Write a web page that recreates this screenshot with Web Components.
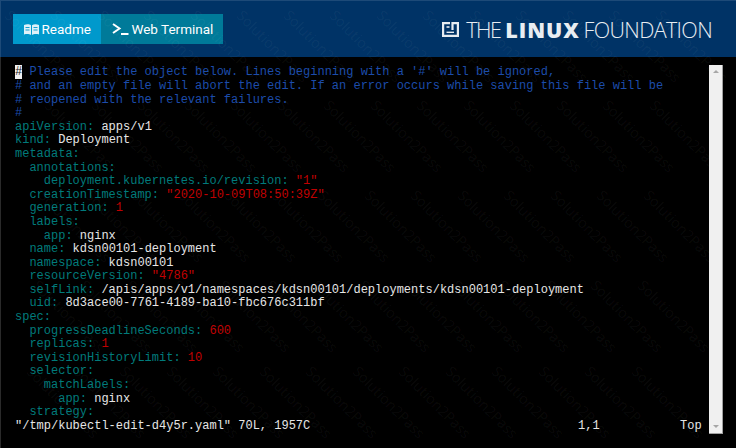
<!DOCTYPE html>
<html>
<head>
<meta charset="utf-8">
<title>Web Terminal</title>
<style>
html, body { margin: 0; padding: 0; background: #000; }
</style>
</head>
<body>
<lab-page>
	<lab-header slot="header">
		<lab-tab active icon="book">Readme</lab-tab>
		<lab-tab icon="prompt">Web Terminal</lab-tab>
	</lab-header>
	<vim-screen slot="screen"></vim-screen>
	<water-mark slot="mark"></water-mark>
</lab-page>

<script>
//page frame: header on top, terminal below, watermark laid over both
class LabPage extends HTMLElement {
	constructor() {
		super();
		this.attachShadow({mode:'open'}).innerHTML = `
		<style>
		:host { display: flex; flex-direction: column; width: 736px; height: 448px; position: relative; overflow: hidden; background: #000; }
		.top { flex: none; }
		.main { flex: 1; min-height: 0; display: flex; }
		</style>
		<div class="top"><slot name="header"></slot></div>
		<div class="main"><slot name="screen"></slot></div>
		<slot name="mark"></slot>`;
	}
}

class LabHeader extends HTMLElement {
	constructor() {
		super();
		this.attachShadow({mode:'open'}).innerHTML = `
		<style>
		:host { display: flex; align-items: flex-start; justify-content: space-between; height: 57px; box-sizing: border-box; padding: 14px 24px 0 13px; background: #003366; box-shadow: inset 1px 1px 0 #1d4a78; }
		.tabs { display: flex; }
		.logo { display: flex; align-items: center; height: 30px; color: #e8edf2; font: 300 21.5px "Open Sans", sans-serif; white-space: nowrap; }
		.the { margin-left: 7px; letter-spacing: -1.5px; }
		.linux { margin-left: 5px; font-weight: 800; letter-spacing: 0.9px; }
		.found { margin-left: 4px; letter-spacing: -0.65px; }
		svg { display: block; flex: none; }
		</style>
		<div class="tabs"><slot></slot></div>
		<div class="logo">
			<svg width="17" height="15" viewBox="0 0 17 15" fill="none" stroke="#e8edf2" stroke-width="2.2">
				<path d="M8 1.100H1.100V13.900H15.900V1.100H10.500V8"/><path d="M4.500 5H7.500" stroke-width="1.600"/><path d="M4.500 10.300H12" stroke-width="1.400"/>
			</svg>
			<span class="the">THE</span><span class="linux">LINUX</span><span class="found">FOUNDATION</span>
		</div>`;
	}
}

class LabTab extends HTMLElement {
	constructor() {
		super();
		const icons = {
			book: `<svg width="15" height="11" viewBox="0 0 15 11"><path fill="#dff1f8" d="M0 1C2.500 0 5.500 .2 7 1.200V11C5.500 10 2.500 9.800 0 10.500ZM15 1C12.500 0 9.500 .2 8 1.200V11C9.500 10 12.500 9.800 15 10.500Z"/><path stroke="#0099cc" stroke-width=".9" d="M1.500 3.500H5.500M1.500 6H5.500M9.500 3.500H13.500M9.500 6H13.500"/></svg>`,
			prompt: `<svg width="17" height="12" viewBox="0 0 17 12" fill="none" stroke="#fff" stroke-width="2"><path d="M1 1L7.500 5.500L1 10"/><path d="M9 11H16.500"/></svg>`
		};
		const icon = icons[this.getAttribute('icon')] || '';
		this.attachShadow({mode:'open'}).innerHTML = `
		<style>
		:host { display: flex; align-items: center; gap: 2.5px; height: 30px; box-sizing: border-box; padding: 0 10px 0 11px; background: #007a99; color: #fff; font: 400 13.5px Roboto, sans-serif; white-space: nowrap; }
		:host([active]) { background: #0099cc; }
		</style>
		${icon}<slot></slot>`;
	}
}

// k = key, v = value, s = string/number, c = comment
const LINES = [
	[['cur','#'],['c'," Please edit the object below. Lines beginning with a '#' will be ignored,"]],
	[['c','# and an empty file will abort the edit. If an error occurs while saving this file will be']],
	[['c','# reopened with the relevant failures.']],
	[['c','#']],
	[['k','apiVersion:'],['v',' apps/v1']],
	[['k','kind:'],['v',' Deployment']],
	[['k','metadata:']],
	[['k','  annotations:']],
	[['k','    deployment.kubernetes.io/revision:'],['s',' "1"']],
	[['k','  creationTimestamp:'],['s',' "2020-10-09T08:50:39Z"']],
	[['k','  generation:'],['s',' 1']],
	[['k','  labels:']],
	[['k','    app:'],['v',' nginx']],
	[['k','  name:'],['v',' kdsn00101-deployment']],
	[['k','  namespace:'],['v',' kdsn00101']],
	[['k','  resourceVersion:'],['s',' "4786"']],
	[['k','  selfLink:'],['v',' /apis/apps/v1/namespaces/kdsn00101/deployments/kdsn00101-deployment']],
	[['k','  uid:'],['v',' 8d3ace00-7761-4189-ba10-fbc676c311bf']],
	[['k','spec:']],
	[['k','  progressDeadlineSeconds:'],['s',' 600']],
	[['k','  replicas:'],['s',' 1']],
	[['k','  revisionHistoryLimit:'],['s',' 10']],
	[['k','  selector:']],
	[['k','    matchLabels:']],
	[['k','      app:'],['v',' nginx']],
	[['k','  strategy:']]
];

class VimScreen extends HTMLElement {
	constructor() {
		super();
		const rows = LINES.map(parts =>
			'<div class="row">' + parts.map(p => `<span class="${p[0]}">${p[1].replace(/"/g,'&quot;')}</span>`).join('') + '</div>'
		).join('');
		this.attachShadow({mode:'open'}).innerHTML = `
		<style>
		:host { display: flex; flex: 1; min-width: 0; padding: 8px 13px 14px 15px; background: #000; box-shadow: inset 1px 0 0 #2a2a2a; }
		.text { flex: 1; min-width: 0; padding-top: 1.4px; font: 400 12px/13.6px "Liberation Mono", monospace; color: #e6e6e6; }
		.row { height: 13.6px; white-space: pre; }
		.k { color: #007b7b; }
		.c { color: #1c4cab; }
		.s { color: #c00000; }
		.v { color: #e6e6e6; }
		.cur { background: #f0f0f0; color: #222; }
		.status { display: grid; grid-template-columns: 563px 102px auto; white-space: pre; height: 13.6px; }
		scroll-bar { flex: none; }
		</style>
		<div class="text">${rows}
			<div class="status"><span>"/tmp/kubectl-edit-d4y5r.yaml" 70L, 1957C</span><span>1,1</span><span>Top</span></div>
		</div>
		<scroll-bar></scroll-bar>`;
	}
}

class ScrollBar extends HTMLElement {
	constructor() {
		super();
		this.attachShadow({mode:'open'}).innerHTML = `
		<style>
		:host { display: flex; flex-direction: column; justify-content: space-between; align-items: center; width: 14px; box-sizing: border-box; padding: 5px 0; background: #f0f0f0; border-right: 1px solid #a0a0a0; border-bottom: 1px solid #a0a0a0; }
		i { width: 0; height: 0; border-left: 3px solid transparent; border-right: 3px solid transparent; }
		.up { border-bottom: 3px solid #a6a6a6; }
		.down { border-top: 3px solid #a6a6a6; }
		</style>
		<i class="up"></i><i class="down"></i>`;
	}
}

// faint diagonal text stamped across the whole screenshot, only where a whole stamp fits
class WaterMark extends HTMLElement {
	constructor() {
		super();
		let cells = '';
		[6, 96, 186, 276, 362].forEach((y, row) => {
			for (let x = -40 - row * 6; x < 736; x += 46.5) {
				if (x < 2 || x + 72 > 734) continue;
				cells += `<span style="left:${x}px;top:${y}px">Solution2Pass</span>`;
			}
		});
		this.attachShadow({mode:'open'}).innerHTML = `
		<style>
		:host { position: absolute; inset: 0; pointer-events: none; font: 400 14.5px "Open Sans", sans-serif; color: rgba(255,255,255,.05); }
		span { position: absolute; line-height: 1; white-space: nowrap; transform-origin: 0 50%; transform: rotate(45deg); }
		</style>
		${cells}`;
	}
}

customElements.define('lab-page', LabPage);
customElements.define('lab-header', LabHeader);
customElements.define('lab-tab', LabTab);
customElements.define('scroll-bar', ScrollBar);
customElements.define('vim-screen', VimScreen);
customElements.define('water-mark', WaterMark);
</script>
</body>
</html>
